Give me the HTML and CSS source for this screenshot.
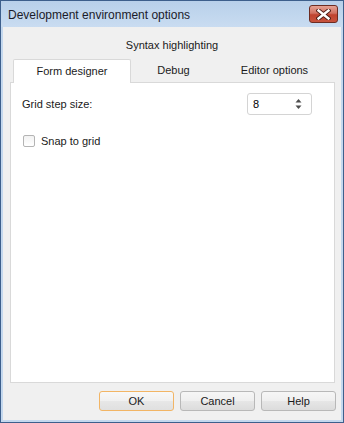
FILE: index.html
```html
<!DOCTYPE html>
<html lang="en">
<head>
  <meta charset="UTF-8" />
  <title>Development environment options</title>
  <link rel="stylesheet" href="styles.css">
</head>
<body>
  <div class="window">
    <div class="titlebar">
      <span class="title">Development environment options</span>
      <button class="close" aria-label="Close">
        <svg width="15" height="11" viewBox="0 0 15 11">
          <path d="M2.5 1.5 L12.5 9.5 M12.5 1.5 L2.5 9.5" stroke="#4a1a14" stroke-width="4.2" stroke-linecap="square"/>
          <path d="M2.5 1.5 L12.5 9.5 M12.5 1.5 L2.5 9.5" stroke="#ffffff" stroke-width="2.4" stroke-linecap="square"/>
        </svg>
      </button>
    </div>

    <div class="client">
      <div class="tabs-back">Syntax highlighting</div>
      <div class="tabs">
        <div class="tab active tab-form">Form designer</div>
        <div class="tab tab-debug">Debug</div>
        <div class="tab tab-editor">Editor options</div>
      </div>

      <div class="panel">
        <div class="row">
          <label class="label">Grid step size:</label>
          <div class="spin">
            <span class="spin-value">8</span>
            <svg class="spin-arrows" width="7" height="12" viewBox="0 0 7 12">
              <path d="M3.5 1 L6.5 4.5 L0.5 4.5 Z" fill="#4d4d4d"/>
              <path d="M0.5 7.5 L6.5 7.5 L3.5 11 Z" fill="#4d4d4d"/>
            </svg>
          </div>
        </div>
        <div class="check-row">
          <span class="checkbox"></span>
          <span class="check-label">Snap to grid</span>
        </div>
      </div>

      <div class="actions">
        <button class="btn btn-default">OK</button>
        <button class="btn">Cancel</button>
        <button class="btn">Help</button>
      </div>
    </div>
  </div>
</body>
</html>
```

FILE: styles.css
```css
body {
  margin: 0;
  background: #ffffff;
  font-family: 'Liberation Sans', Arial, sans-serif;
  font-size: 11px;
  color: #1a1a1a;
}
.window {
  width: 344px;
  height: 423px;
  box-sizing: border-box;
  border: 1px solid #3d5f8c;
  background: #c4d8ee;
  padding: 0 2px 2px 2px;
  display: flex;
  flex-direction: column;
}
.titlebar {
  height: 26px;
  margin: 0 -2px;
  padding: 0 5px 0 7px;
  background: linear-gradient(#b8d0ea, #c9dcf1);
  display: flex;
  align-items: flex-start;
  justify-content: space-between;
}
.title {
  margin-top: 7px;
  font-size: 12px;
  color: #1b1b2a;
}
.close {
  margin-top: 4px;
  width: 29px;
  height: 18px;
  padding: 0;
  border: 1px solid #6d2c22;
  border-radius: 3px;
  background: linear-gradient(#e6a294, #d07161 45%, #c0432f 55%, #c7533e);
  display: flex;
  align-items: center;
  justify-content: center;
}
.client {
  flex: 1;
  background: #f0f0f0;
  display: flex;
  flex-direction: column;
}
.tabs-back {
  height: 32px;
  box-sizing: border-box;
  padding-top: 10px;
  line-height: 16px;
  text-align: center;
}
.tabs {
  margin: 0 6px 0 7px;
  padding-left: 3px;
  height: 23px;
  border-bottom: 1px solid #d9d9d9;
  display: flex;
}
.tab {
  height: 23px;
  line-height: 23px;
  text-align: center;
}
.tab.active {
  height: 24px;
  box-sizing: border-box;
  background: #ffffff;
  border: 1px solid #d9d9d9;
  border-bottom: none;
  border-radius: 2px 2px 0 0;
  line-height: 22px;
}
.tab-form { width: 118px; }
.tab-debug { width: 85px; }
.tab-editor { width: 117px; }
.panel {
  margin: 0 6px 0 7px;
  height: 300px;
  box-sizing: border-box;
  background: #ffffff;
  border: 1px solid #d9d9d9;
  border-top: none;
  padding: 10px 22px 0 10px;
}
.row {
  height: 22px;
  display: flex;
  align-items: center;
  justify-content: space-between;
}
.label {
  padding-left: 1px;
}
.spin {
  width: 65px;
  height: 22px;
  box-sizing: border-box;
  border: 1px solid #d4d4d4;
  border-radius: 3px;
  display: flex;
  align-items: center;
  justify-content: space-between;
  padding: 0 9px 0 5px;
}
.spin-value {
  color: #000;
}
.check-row {
  margin-top: 19px;
  display: flex;
  align-items: center;
  height: 13px;
}
.checkbox {
  width: 12px;
  height: 12px;
  box-sizing: border-box;
  margin-left: 2px;
  border: 1px solid #b4b4b4;
  border-radius: 2px;
  background: linear-gradient(#f2f2f2, #ffffff);
}
.check-label {
  margin-left: 6px;
}
.actions {
  margin-top: 8px;
  padding-right: 5px;
  display: flex;
  justify-content: flex-end;
  gap: 6px;
}
.btn {
  width: 75px;
  height: 20px;
  padding: 0;
  font-family: 'Liberation Sans', Arial, sans-serif;
  font-size: 11px;
  color: #1a1a1a;
  border: 1px solid #b8b8b8;
  border-radius: 3px;
  background: linear-gradient(#f6f6f6, #efefef 50%, #e6e6e6 51%, #dcdcdc);
}
.btn-default {
  border-color: #f2b565;
  background: linear-gradient(#f8f8f8, #f0f0f0 50%, #e7e7e7 51%, #e0e0e0);
}
```
